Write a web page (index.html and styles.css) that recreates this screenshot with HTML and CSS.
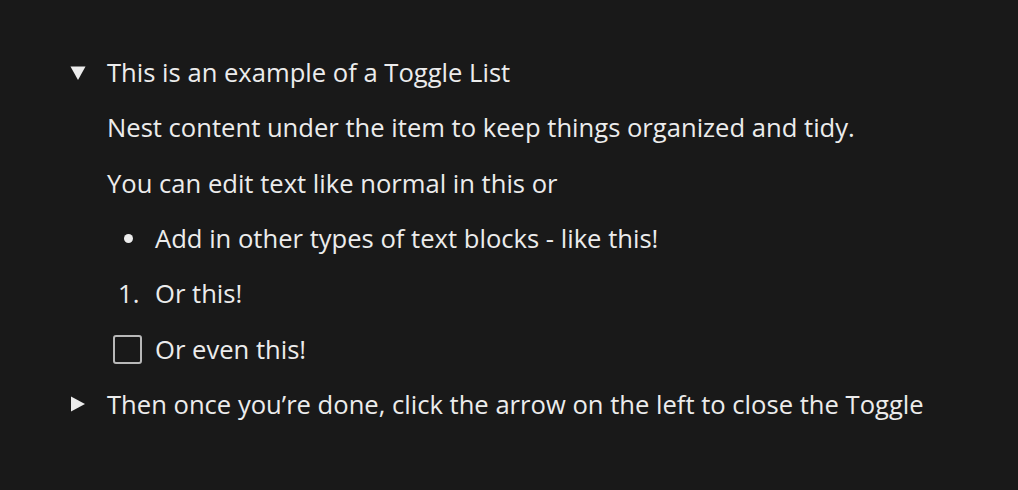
FILE: index.html
```html
<!DOCTYPE html>
<html>
<head>
<meta charset="utf-8">
<link rel="stylesheet" href="styles.css">
</head>
<body>
<div class="page">
  <div class="toggle">
    <div class="row">
      <span class="arrow"><svg width="16" height="14" viewBox="0 0 16 14"><polygon points="0.5,0.5 15.5,0.5 8,14" fill="#ececec"/></svg></span>
      <span class="text">This is an example of a Toggle List</span>
    </div>
    <div class="children">
      <div class="row"><span class="text">Nest content under the item to keep things organized and tidy.</span></div>
      <div class="row"><span class="text">You can edit text like normal in this or</span></div>
      <div class="row item"><span class="marker"><span class="dot"></span></span><span class="text">Add in other types of text blocks - like this!</span></div>
      <div class="row item"><span class="marker num">1.</span><span class="text">Or this!</span></div>
      <div class="row item"><span class="marker"><span class="check"></span></span><span class="text">Or even this!</span></div>
    </div>
  </div>
  <div class="toggle">
    <div class="row">
      <span class="arrow"><svg width="16" height="16" viewBox="0 0 16 16"><polygon points="1,0.5 15,8 1,15.5" fill="#ececec"/></svg></span>
      <span class="text">Then once you’re done, click the arrow on the left to close the Toggle</span>
    </div>
  </div>
</div>
</body>
</html>
```
FILE: styles.css
```css
html, body {
  margin: 0;
  padding: 0;
  background: #191919;
}
body {
  font-family: "Open Sans", "Noto Sans", sans-serif;
  font-size: 25.6px;
  color: #ececec;
}
.page {
  padding: 45px 0 0 70px;
}
.row {
  display: flex;
  align-items: center;
  height: 55.3px;
  white-space: nowrap;
}
.arrow {
  width: 37px;
  display: flex;
  align-items: center;
}
.children {
  padding-left: 37px;
}
.marker {
  width: 48px;
  display: flex;
  align-items: center;
  justify-content: center;
  flex: none;
}
.dot {
  width: 9px;
  height: 9px;
  border-radius: 50%;
  background: #ececec;
  margin-left: -6px;
}
.num {
  justify-content: flex-start;
  padding-left: 11px;
  box-sizing: border-box;
}
.check {
  width: 25px;
  height: 25px;
  border: 2px solid #b8b8b8;
  border-radius: 3px;
  margin-left: -8px;
}
```
